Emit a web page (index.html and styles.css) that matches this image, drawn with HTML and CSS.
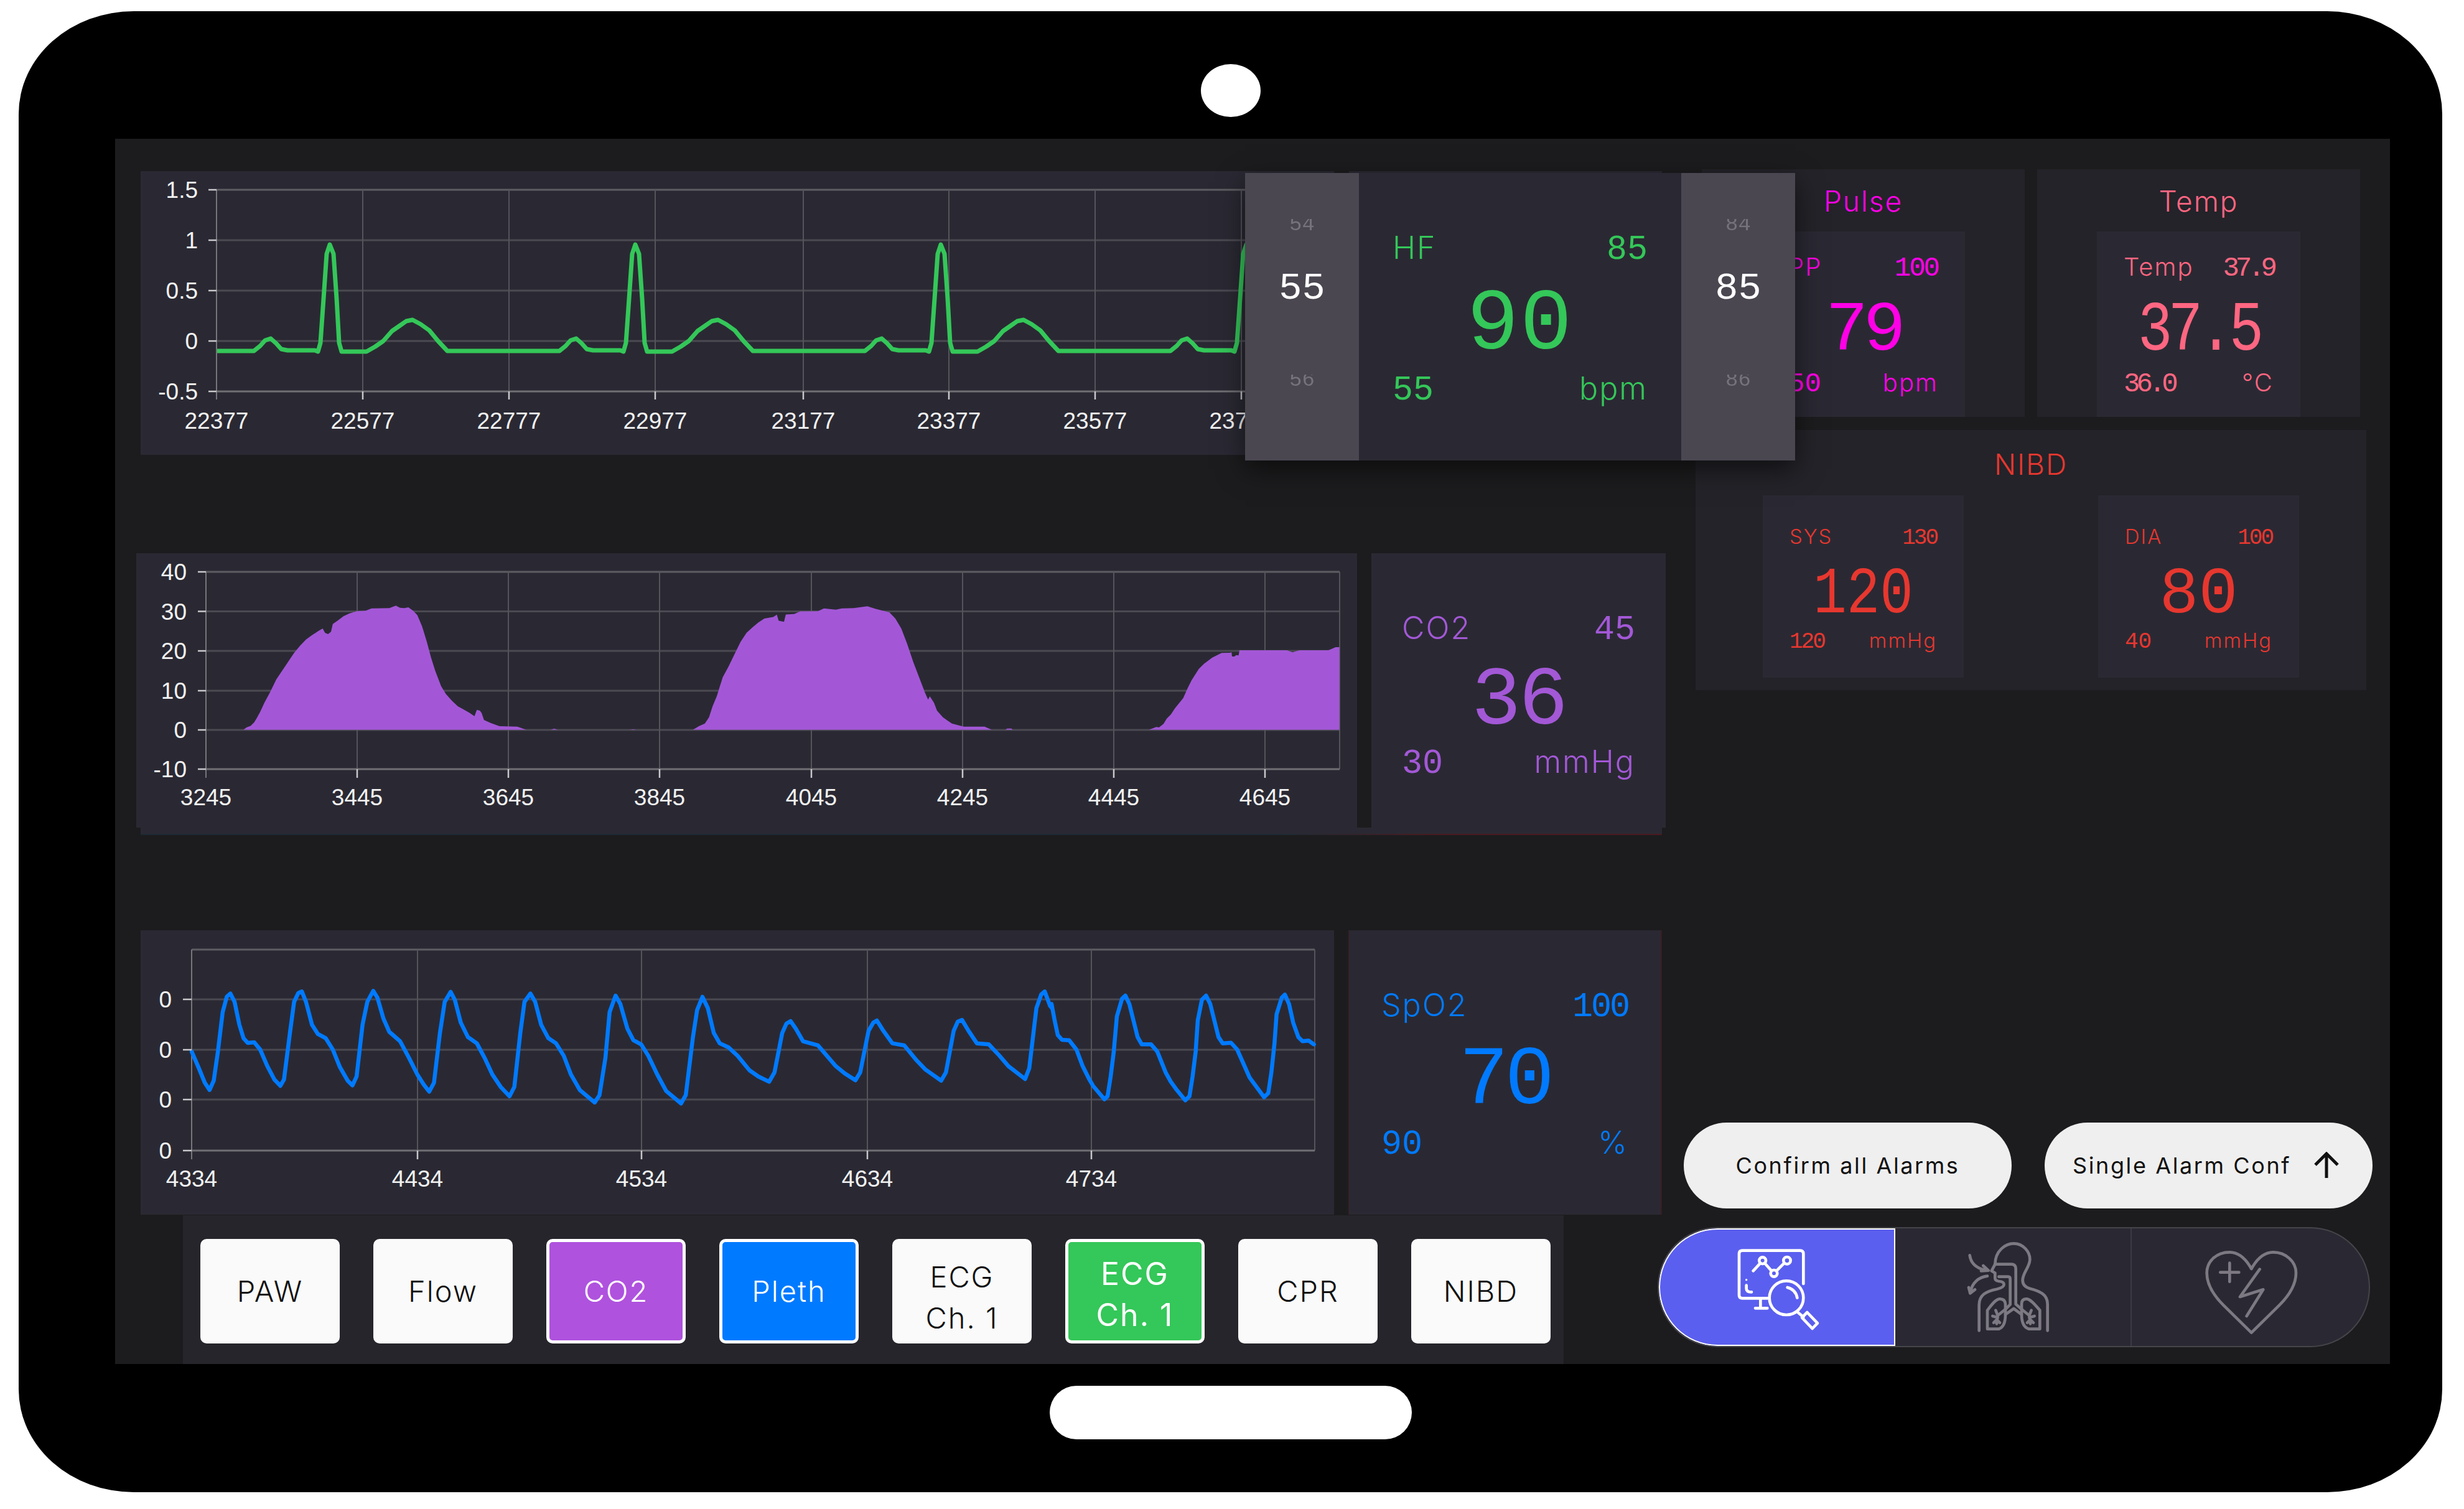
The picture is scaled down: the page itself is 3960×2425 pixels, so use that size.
FILE: index.html
```html
<!DOCTYPE html>
<html lang="en">
<head>
<meta charset="utf-8">
<title>Patient monitor</title>
<link rel="stylesheet" href="styles.css">
</head>
<body>
<div class="device">
  <div class="camera"></div>
  <main class="screen">
    <div class="monitors">
      <section class="row row-ecg">
        <div class="chart chart-ecg">
          <svg viewBox="226 275 1918 456" aria-label="ECG chart">
            <g class="gh">
              <line x1="348" x2="2144" y1="386" y2="386"/><line x1="348" x2="2144" y1="467" y2="467"/><line x1="348" x2="2144" y1="548" y2="548"/>
            </g>
            <line class="gt" x1="348" x2="2144" y1="305" y2="305"/>
            <g class="gv">
              <line x1="583" x2="583" y1="305" y2="629"/><line x1="818" x2="818" y1="305" y2="629"/><line x1="1053" x2="1053" y1="305" y2="629"/><line x1="1291" x2="1291" y1="305" y2="629"/><line x1="1525" x2="1525" y1="305" y2="629"/><line x1="1760" x2="1760" y1="305" y2="629"/><line x1="1995" x2="1995" y1="305" y2="629"/>
            </g>
            <path id="ecgbeat" class="trace-ecg" d="M348 564H408L418 556L426 547L435 544L444 552L452 561L462 563H506L511 565L515 551L520 480L525 408L530 393L536 408L541 480L545 551L549 565L554 565H589L603 557L616 548L630 532L643 523L653 516L663 514L676 521L690 531L704 548L719 564H839"/>
            <use href="#ecgbeat" x="491"/><use href="#ecgbeat" x="982"/><use href="#ecgbeat" x="1473"/>
            <line class="gb" x1="348" x2="2144" y1="629" y2="629"/>
            <line class="ga" x1="348" x2="348" y1="305" y2="642"/>
            <g class="ticks">
              <line x1="335" x2="348" y1="305" y2="305"/><line x1="335" x2="348" y1="386" y2="386"/><line x1="335" x2="348" y1="467" y2="467"/><line x1="335" x2="348" y1="548" y2="548"/><line x1="335" x2="348" y1="629" y2="629"/>
              <line x1="583" x2="583" y1="629" y2="642"/><line x1="818" x2="818" y1="629" y2="642"/><line x1="1053" x2="1053" y1="629" y2="642"/><line x1="1291" x2="1291" y1="629" y2="642"/><line x1="1525" x2="1525" y1="629" y2="642"/><line x1="1760" x2="1760" y1="629" y2="642"/><line x1="1995" x2="1995" y1="629" y2="642"/>
            </g>
            <g class="ylab">
              <text x="318" y="318">1.5</text><text x="318" y="399">1</text><text x="318" y="480">0.5</text><text x="318" y="561">0</text><text x="318" y="642">-0.5</text>
            </g>
            <g class="xlab">
              <text x="348" y="689">22377</text><text x="583" y="689">22577</text><text x="818" y="689">22777</text><text x="1053" y="689">22977</text><text x="1291" y="689">23177</text><text x="1525" y="689">23377</text><text x="1760" y="689">23577</text><text x="1995" y="689">23777</text>
            </g>
          </svg>
        </div>
        <div class="card card-base"></div>
      </section>

      <section class="row row-co2">
        <div class="chart chart-co2">
          <svg viewBox="219 889 1962 441" aria-label="CO2 chart">
            <g class="gh">
              <line x1="331" x2="2153" y1="982.5" y2="982.5"/><line x1="331" x2="2153" y1="1046" y2="1046"/><line x1="331" x2="2153" y1="1110" y2="1110"/><line x1="331" x2="2153" y1="1173" y2="1173"/>
            </g>
            <line class="gt" x1="331" x2="2153" y1="919" y2="919"/>
            <g class="gv">
              <line x1="574" x2="574" y1="919" y2="1236"/><line x1="817" x2="817" y1="919" y2="1236"/><line x1="1060" x2="1060" y1="919" y2="1236"/><line x1="1304" x2="1304" y1="919" y2="1236"/><line x1="1547" x2="1547" y1="919" y2="1236"/><line x1="1790" x2="1790" y1="919" y2="1236"/><line x1="2033" x2="2033" y1="919" y2="1236"/><line x1="2153" x2="2153" y1="919" y2="1236"/>
            </g>
            <g transform="translate(200 860) scale(.9567 .3571)" class="area">
              <path d="M200 876L205 865L212 858L218 842L222 825L228 795L235 755L245 705L255 650L265 610L275 570L285 530L295 498L305 470L315 450L325 433L333 420L337 440L342 445L347 435L350 400L358 385L368 365L378 352L390 342L405 340L415 330L445 328L456 317L463 327L470 328L477 325L485 340L492 360L500 410L508 480L515 550L522 610L532 680L540 715L550 745L560 770L570 785L580 800L588 815L592 786L597 790L600 800L604 832L615 845L630 860L660 862L675 876ZM716 876L722 871L728 876ZM848 876L855 874L860 876Z"/>
              <path d="M955 876L965 860L975 848L982 820L988 770L995 725L1005 640L1015 590L1025 535L1035 480L1045 440L1055 415L1065 393L1075 375L1090 368L1096 358L1099 385L1108 390L1111 357L1125 355L1135 343L1165 342L1175 330L1195 335L1205 330L1225 328L1248 320L1262 332L1285 347L1295 375L1305 420L1315 490L1325 570L1335 640L1345 710L1350 740L1353 725L1360 755L1365 790L1375 820L1390 848L1410 862L1445 862L1457 876ZM1480 876L1483 870L1490 870L1492 876Z"/>
            </g>
            <g transform="translate(1800 950) scale(.3333)" class="area">
              <path d="M140 668L175 655L188 657L210 640L225 615L245 595L265 565L305 515L325 470L345 430L380 375L405 350L445 320L490 298L530 297L538 295L540 315L552 315L560 308L572 310L576 285L805 285L832 295L865 285L1005 285L1040 270L1058 270V668Z"/>
            </g>
            <line class="gb" x1="331" x2="2153" y1="1236" y2="1236"/>
            <line class="ga" x1="331" x2="331" y1="919" y2="1250"/>
            <g class="ticks">
              <line x1="318" x2="331" y1="919" y2="919"/><line x1="318" x2="331" y1="982.5" y2="982.5"/><line x1="318" x2="331" y1="1046" y2="1046"/><line x1="318" x2="331" y1="1110" y2="1110"/><line x1="318" x2="331" y1="1173" y2="1173"/><line x1="318" x2="331" y1="1236" y2="1236"/>
              <line x1="574" x2="574" y1="1236" y2="1250"/><line x1="817" x2="817" y1="1236" y2="1250"/><line x1="1060" x2="1060" y1="1236" y2="1250"/><line x1="1304" x2="1304" y1="1236" y2="1250"/><line x1="1547" x2="1547" y1="1236" y2="1250"/><line x1="1790" x2="1790" y1="1236" y2="1250"/><line x1="2033" x2="2033" y1="1236" y2="1250"/>
            </g>
            <g class="ylab">
              <text x="300" y="932">40</text><text x="300" y="996">30</text><text x="300" y="1059">20</text><text x="300" y="1123">10</text><text x="300" y="1186">0</text><text x="300" y="1249">-10</text>
            </g>
            <g class="xlab">
              <text x="331" y="1294">3245</text><text x="574" y="1294">3445</text><text x="817" y="1294">3645</text><text x="1060" y="1294">3845</text><text x="1304" y="1294">4045</text><text x="1547" y="1294">4245</text><text x="1790" y="1294">4445</text><text x="2033" y="1294">4645</text>
            </g>
          </svg>
        </div>
        <div class="card card-co2 vital">
          <div class="top"><span class="word">CO2</span><span>45</span></div>
          <div class="val">36</div>
          <div class="bot"><span>30</span><span class="word">mmHg</span></div>
        </div>
      </section>
      <div class="strip"></div>

      <section class="row row-spo2">
        <div class="chart chart-spo2">
          <svg viewBox="226 1495 1918 457" aria-label="SpO2 chart">
            <g class="gh">
              <line x1="308" x2="2113" y1="1606" y2="1606"/><line x1="308" x2="2113" y1="1687" y2="1687"/><line x1="308" x2="2113" y1="1767" y2="1767"/>
            </g>
            <line class="gt" x1="308" x2="2113" y1="1526" y2="1526"/>
            <g class="gv">
              <line x1="671" x2="671" y1="1526" y2="1849"/><line x1="1031" x2="1031" y1="1526" y2="1849"/><line x1="1394" x2="1394" y1="1526" y2="1849"/><line x1="1754" x2="1754" y1="1526" y2="1849"/><line x1="2113" x2="2113" y1="1526" y2="1849"/>
            </g>
            <line class="gb" x1="308" x2="2113" y1="1849" y2="1849"/>
            <line class="ga" x1="308" x2="308" y1="1526" y2="1863"/>
            <g transform="translate(200 1460) scale(.9567 .3333)">
              <path class="trace-spo2" d="M113 690L125 770L135 840L143 875L150 830L157 690L165 500L172 425L178 410L185 450L193 560L200 625L207 648L218 645L228 680L240 760L252 825L262 855L268 825L278 600L285 450L292 408L298 400L305 450L315 560L325 605L338 625L350 680L362 765L375 830L383 853L390 810L400 560L408 450L418 397L425 430L435 530L445 595L463 640L478 720L492 800L503 850L512 883L520 840L530 600L538 450L548 402L555 440L565 550L577 620L592 650L605 720L618 800L632 860L647 905L655 860L665 600L672 450L682 410L690 450L700 560L712 625L725 650L738 710L750 800L765 875L790 935L798 900L808 720L815 500L825 420L833 460L845 580L855 635L868 655L880 710L895 800L910 880L935 940L943 900L955 620L962 490L971 426L980 480L990 600L1000 650L1015 670L1030 710L1050 780L1065 810L1083 835L1092 790L1105 600L1112 555L1119 543L1128 580L1140 640L1165 660L1180 710L1195 760L1210 795L1228 828L1236 790L1250 590L1258 550L1264 540L1275 590L1290 650L1310 660L1330 730L1345 775L1372 830L1380 790L1393 590L1400 545L1407 537L1418 590L1432 650L1452 655L1470 710L1485 760L1513 822L1520 770L1532 480L1540 415L1546 400L1555 470L1558 480"/>
            </g>
            <g transform="translate(1690 1490) scale(.3333)">
              <path class="trace-spo2" d="M0 370L15 450L30 520L50 543L85 545L120 590L150 670L180 730L200 765L255 830L270 815L285 720L300 600L315 430L340 345L356 330L375 370L395 450L415 530L435 565L480 565L510 600L550 700L575 745L600 780L645 835L665 815L680 720L695 600L705 450L725 350L745 330L765 370L785 450L805 530L825 560L865 557L895 590L955 725L1025 820L1045 800L1060 700L1075 560L1085 420L1110 340L1125 325L1145 370L1165 460L1190 530L1210 550L1240 547L1265 565"/>
            </g>
            <g class="ticks">
              <line x1="294" x2="308" y1="1606" y2="1606"/><line x1="294" x2="308" y1="1687" y2="1687"/><line x1="294" x2="308" y1="1767" y2="1767"/><line x1="294" x2="308" y1="1849" y2="1849"/>
              <line x1="671" x2="671" y1="1849" y2="1863"/><line x1="1031" x2="1031" y1="1849" y2="1863"/><line x1="1394" x2="1394" y1="1849" y2="1863"/><line x1="1754" x2="1754" y1="1849" y2="1863"/>
            </g>
            <g class="ylab">
              <text x="276" y="1619">0</text><text x="276" y="1700">0</text><text x="276" y="1780">0</text><text x="276" y="1862">0</text>
            </g>
            <g class="xlab">
              <text x="308" y="1907">4334</text><text x="671" y="1907">4434</text><text x="1031" y="1907">4534</text><text x="1394" y="1907">4634</text><text x="1754" y="1907">4734</text>
            </g>
          </svg>
        </div>
        <div class="card card-spo2 vital">
          <div class="top"><span class="word">SpO2</span><span class="tight">100</span></div>
          <div class="val">70</div>
          <div class="bot"><span>90</span><span class="word">%</span></div>
        </div>
      </section>

      <nav class="curves">
        <button class="curve">PAW</button>
        <button class="curve">Flow</button>
        <button class="curve on-co2">CO2</button>
        <button class="curve on-pleth">Pleth</button>
        <button class="curve two">ECG<br>Ch. 1</button>
        <button class="curve two on-ecg">ECG<br>Ch. 1</button>
        <button class="curve">CPR</button>
        <button class="curve">NIBD</button>
      </nav>
    </div>

    <aside class="side">
      <div class="pair">
        <section class="panel panel-pulse">
          <h2 class="title">Pulse</h2>
          <div class="inner inner-top vital">
            <div class="top"><span class="word">PP</span><span class="tight">100</span></div>
            <div class="val val-79">79</div>
            <div class="bot"><span>50</span><span class="word">bpm</span></div>
          </div>
        </section>
        <section class="panel panel-temp">
          <h2 class="title">Temp</h2>
          <div class="inner inner-top vital">
            <div class="top"><span class="word">Temp</span><span class="narrow">37.9</span></div>
            <div class="val val-temp">37.5</div>
            <div class="bot"><span class="narrow">36.0</span><span class="word">°C</span></div>
          </div>
        </section>
      </div>
      <section class="panel panel-nibd">
        <h2 class="title">NIBD</h2>
        <div class="nibd-cols">
          <div class="inner inner-nibd vital">
            <div class="top"><span class="word">SYS</span><span class="tight">130</span></div>
            <div class="val val-120">120</div>
            <div class="bot"><span class="tight">120</span><span class="word">mmHg</span></div>
          </div>
          <div class="inner inner-nibd vital">
            <div class="top"><span class="word">DIA</span><span class="tight">100</span></div>
            <div class="val">80</div>
            <div class="bot"><span>40</span><span class="word">mmHg</span></div>
          </div>
        </div>
      </section>
      <div class="alarms">
        <button class="pill">Confirm all Alarms</button>
        <button class="pill pill-arrow">Single Alarm Conf
          <svg class="arrow" viewBox="0 0 44 44"><path d="M22 42V3M4 21L22 3L40 21"/></svg>
        </button>
      </div>
      <nav class="modes">
        <div class="mode mode-on">
          <svg class="icon" viewBox="0 0 600 480">
            <path d="M412 222V78Q412 62 396 62H118Q102 62 102 78V276Q102 292 118 292H240M205 292V340M180 340H238M137 230V245Q137 262 162 262M170 160L205 122M225 122L258 160M282 160L320 122M335 240Q375 250 382 290M385 360L412 382"/>
            <circle cx="215" cy="110" r="16"/><circle cx="270" cy="172" r="16"/><circle cx="333" cy="110" r="17"/><circle cx="330" cy="290" r="82"/>
            <path d="M430 360L480 412L455 438L405 385Z"/>
            <circle class="dot" cx="137" cy="203" r="5"/>
          </svg>
        </div>
        <div class="mode mode-mid">
          <svg class="icon icon-dim" viewBox="0 0 600 480">
            <path d="M172 130C172 60 225 28 262 28C310 28 340 70 340 105C340 140 305 170 305 205C305 230 320 240 340 245C390 258 425 275 425 320V448"/>
            <path d="M172 128L155 160L172 170V195Q172 207 190 210Q215 212 215 225Q215 240 180 248C130 258 95 275 95 325V448"/>
            <path d="M172 128H250Q272 128 272 150V320L300 345M190 188H235Q245 188 245 200V322L222 345"/>
            <path d="M135 440H190Q222 430 222 370V320Q220 295 195 295C175 295 150 330 135 350ZM388 440H335Q300 430 300 370V320Q300 295 322 295C345 295 370 330 388 350Z"/>
            <path d="M222 370L262 342L300 370M222 345L185 375L180 415M175 350L185 375M160 378L185 385M165 410L180 395L195 410M300 345L337 375L342 415M347 350L337 375M362 378L337 385M357 410L342 395L327 410"/>
            <path d="M50 85C55 125 85 150 135 158M115 135L140 158L105 160M135 185C95 190 60 215 52 268M45 240L52 268L75 250"/>
          </svg>
        </div>
        <div class="mode mode-end">
          <svg class="icon icon-dim" viewBox="0 0 600 480">
            <path d="M265 150C240 105 205 70 160 70C95 70 50 115 50 170C50 230 85 280 130 325L265 458L400 325C445 280 480 230 480 170C480 115 430 70 370 70C325 70 290 105 265 150Z"/>
            <path d="M160 122V212M115 167H205M305 152L210 285L322 250L242 378"/>
          </svg>
        </div>
      </nav>
    </aside>

    <section class="hf">
      <div class="wheel">
        <span class="ghost ghost-top">54</span><span class="sel">55</span><span class="ghost ghost-bot">56</span>
      </div>
      <div class="hf-main vital">
        <div class="top"><span class="word">HF</span><span>85</span></div>
        <div class="val">90</div>
        <div class="bot"><span>55</span><span class="word">bpm</span></div>
      </div>
      <div class="wheel">
        <span class="ghost ghost-top">84</span><span class="sel">85</span><span class="ghost ghost-bot">86</span>
      </div>
    </section>
  </main>
  <div class="home"></div>
</div>
</body>
</html>
```
FILE: styles.css
```css
* { box-sizing: border-box; }
html, body { margin: 0; padding: 0; background: #fff; }
body { width: 3960px; height: 2425px; overflow: hidden; font-family: "Liberation Mono", monospace; }
.device {
  margin: 18px 0 0 30px; width: 3895px; height: 2380px; background: #000;
  border-radius: 185px / 165px; display: flex; flex-direction: column; align-items: center;
  padding-top: 85px;
}
.camera { width: 96px; height: 85px; border-radius: 50%; background: #fff; flex: none; }
.home { width: 582px; height: 86px; border-radius: 43px; background: #fff; flex: none; margin-top: 35px; }
.screen {
  position: relative; margin: 35px 0 0 155px; width: 3656px; height: 1969px; flex: none;
  align-self: flex-start; background: #1c1c1e; display: flex;
}
.monitors { width: 2515px; flex: none; display: flex; flex-direction: column; }
.side { flex: 1; display: flex; flex-direction: column; }

.row { display: flex; flex: none; }
.row-ecg { margin: 52px 0 0 41px; height: 456px; gap: 24px; }
.row-co2 { margin: 158px 0 0 34px; height: 441px; gap: 23px; }
.row-spo2 { margin: 153px 0 0 41px; height: 457px; gap: 23px; }
.strip {
  margin-left: 41px; width: 2445px; height: 12px; flex: none; background: #2a2933;
  border-bottom: 2px solid; border-image: linear-gradient(90deg, #1e2a33 0 75%, #4a1a20 85% 100%) 1;
}
.chart { background: #2a2933; height: 100%; flex: none; }
.chart svg { display: block; width: 100%; height: 100%; }
.chart-ecg, .chart-spo2 { width: 1918px; }
.chart-co2 { width: 1962px; }
.card { background: #2a2933; height: 100%; flex: none; }
.card-base { width: 503px; }
.card-co2 { width: 473px; padding: 95px 49px 0; }
.card-spo2 { width: 504px; padding: 95px 52px 0; border-left: 1px solid #3a1c20; border-right: 2px solid #3a1c20; }

.gh line { stroke: #4b4a52; stroke-width: 3; }
.gt { stroke: #5e5d63; stroke-width: 3; }
.gb { stroke: #706f74; stroke-width: 3; }
.ga { stroke: #77767b; stroke-width: 2; }
.gv line { stroke: #55545b; stroke-width: 2; }
.ticks line { stroke: #c9c9cc; stroke-width: 2.5; }
.ylab text, .xlab text { font-family: "Liberation Sans", Arial, sans-serif; font-size: 37px; fill: #f2f2f2; }
.ylab text { text-anchor: end; }
.xlab text { text-anchor: middle; }
.area path { fill: #a357d7; }
.trace-ecg { fill: none; stroke: #34c759; stroke-width: 7; stroke-linejoin: round; }
.trace-spo2 { fill: none; stroke: #007aff; stroke-width: 6.5; stroke-linejoin: round; stroke-linecap: round; vector-effect: non-scaling-stroke; }

.vital { display: flex; flex-direction: column; }
.top, .bot { display: flex; justify-content: space-between; align-items: baseline; }
.val { text-align: center; }
.word { font-family: Inter, "Liberation Sans", sans-serif; font-weight: 300; letter-spacing: 2px; font-size: .91em; line-height: 1; }
.tight { letter-spacing: -3px; }
.narrow { letter-spacing: -6px; }

.card-co2, .card-spo2, .hf-main { font-size: 55px; line-height: 55px; }
.card-co2 { color: #a358d6; }
.card-co2 .val { font-size: 133px; line-height: 133px; margin-top: 21px; letter-spacing: -4px; }
.card-co2 .bot { margin-top: 5px; }
.card-spo2 { color: #007aff; }
.card-spo2 .val { font-size: 133px; line-height: 133px; margin-top: 25px; letter-spacing: -6px; }
.card-spo2 .bot { margin-top: 7px; }

.hf {
  position: absolute; left: 1816px; top: 55px; width: 884px; height: 462px;
  display: flex; background: #2a2933; box-shadow: 0 14px 40px rgba(0,0,0,.55);
}
.wheel {
  width: 183px; flex: none; background: #4a4751; display: flex; flex-direction: column; align-items: center;
  font-size: 62px; color: #fff;
}
.sel { line-height: 62px; margin-top: 55px; flex: none; }
.ghost {
  flex: none; font-size: 34px; line-height: 34px; color: transparent;
  background: linear-gradient(transparent 24%, #76737c 24%);
  -webkit-background-clip: text; background-clip: text;
}
.ghost-top { margin-top: 66px; }
.ghost-bot { margin-top: 99px; }
.hf-main { flex: 1; padding: 95px 54px 0; color: #34c759; }
.hf-main .val { font-size: 139px; line-height: 139px; margin-top: 25px; letter-spacing: 2px; }
.hf-main .bot { margin-top: 6px; }

.pair { display: flex; gap: 20px; margin: 49px 0 0 35px; flex: none; }
.panel { background: #232329; flex: none; }
.panel-pulse, .panel-temp { width: 519px; height: 398px; padding-top: 28px; }
.panel-pulse { color: #ff00e6; }
.panel-temp { color: #ff6681; }
.title {
  margin: 0; font-family: Inter, "Liberation Sans", sans-serif; font-weight: 300; font-size: 46px;
  line-height: 46px; text-align: center; letter-spacing: 2px;
}
.inner { background: #2a2933; flex: none; }
.inner-top {
  margin: 26px auto 0; width: 327px; height: 298px; padding: 37px 43px 0;
  font-size: 44px; line-height: 44px;
}
.inner-top .val { font-size: 114px; line-height: 114px; margin-top: 22px; }
.inner-top .val-79 { letter-spacing: -8px; }
.inner-top .val-temp { letter-spacing: -8px; transform: scaleX(.81); }
.inner-top .bot { margin-top: 6px; }

.panel-nibd {
  margin: 21px 0 0 25px; width: 1078px; height: 418px; padding-top: 32px; color: #e7372f;
}
.nibd-cols { display: flex; gap: 216px; margin-top: 27px; padding-left: 108px; }
.inner-nibd { width: 323px; height: 293px; padding: 50px 43px 0; font-size: 36px; line-height: 36px; }
.inner-nibd .val { font-size: 105px; line-height: 105px; margin-top: 21px; }
.inner-nibd .val-120 { transform: scaleX(.85); }
.inner-nibd .bot { margin-top: 4px; }

.alarms { display: flex; gap: 53px; margin: 695px 0 0 6px; flex: none; }
.pill {
  width: 527px; height: 138px; border: 0; border-radius: 69px; background: #efefef; color: #111;
  font-family: Inter, "Liberation Sans", sans-serif; font-size: 36px; letter-spacing: 2.6px; padding: 0;
  display: flex; align-items: center; justify-content: center;
}
.pill-arrow { justify-content: space-between; padding: 0 52px 0 45px; }
.arrow { width: 44px; height: 44px; fill: none; stroke: #111; stroke-width: 5; }

.modes {
  margin: 30px 0 0 -36px; width: 1145px; height: 193px; flex: none; display: flex;
  border-radius: 96px; background: #2a2933; border: 2px solid #45454a; overflow: hidden;
}
.mode { display: flex; align-items: center; justify-content: center; flex: none; height: 100%; }
.mode-on { width: 380px; background: #5b5fef; box-shadow: inset 0 0 0 2px #fff; padding-left: 10px; border-radius: 96px 0 0 96px; }
.mode-mid { width: 380px; border-right: 2px solid #3c3b44; padding-left: 28px; }
.mode-end { flex: 1; padding-left: 26px; }
.icon { width: 200px; height: 160px; fill: none; stroke: #fff; stroke-width: 14; stroke-linecap: round; stroke-linejoin: round; }
.icon .dot { fill: #fff; stroke: none; }
.icon-dim { stroke: #7d7983; }

.curves {
  margin: 1px 0 0 109px; width: 2219px; height: 239px; flex: none; background: #25252b;
  display: flex; gap: 54px; padding: 38px 28px 0;
}
.curve {
  width: 224px; height: 168px; flex: none; border: 0; border-radius: 10px; background: #fafafa; color: #111;
  font-family: Inter, "Liberation Sans", sans-serif; font-weight: 300; font-size: 47px; line-height: 66px;
  letter-spacing: 2px; padding: 0;
}
.two { padding-top: 20px; }
.on-co2, .on-pleth, .on-ecg { color: #fff; border: 5px solid #fff; }
.on-co2 { background: #af52de; }
.on-pleth { background: #007aff; }
.on-ecg { background: #34c759; padding-top: 10px; font-size: 50px; font-weight: 400; }
```
